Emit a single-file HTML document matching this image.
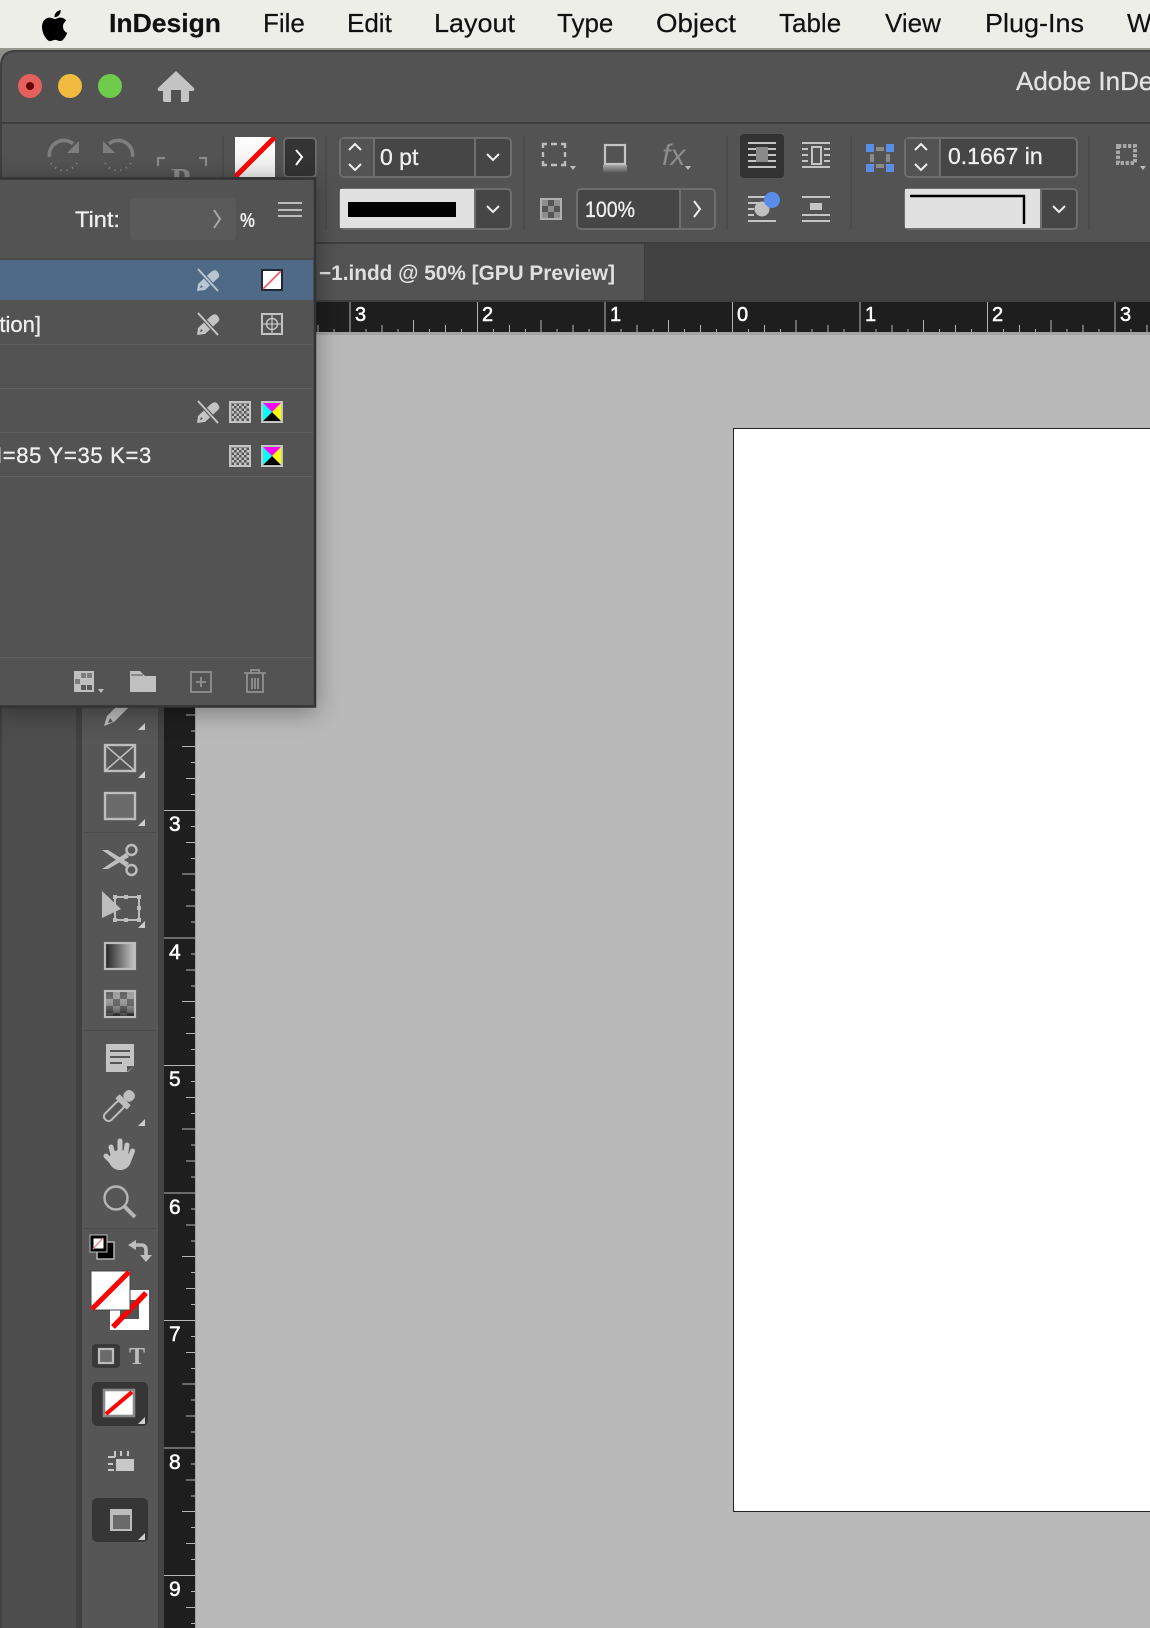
<!DOCTYPE html>
<html>
<head>
<meta charset="utf-8">
<title>InDesign</title>
<style>
html,body{margin:0;padding:0;background:#b9b9b9;}
body{width:1150px;height:1628px;overflow:hidden;}
svg{display:block;}
text{font-family:"Liberation Sans",sans-serif;}
.m{font-size:26px;fill:#111;stroke:#111;stroke-width:.2;}
.u{font-size:22px;fill:#f0f0f0;stroke:#f0f0f0;stroke-width:.3;}
.r{font-size:20px;fill:#fff;stroke:#fff;stroke-width:.5;}
.v{font-size:21px;fill:#fff;stroke:#fff;stroke-width:.5;}
</style>
</head>
<body>
<svg width="1150" height="1628" viewBox="0 0 1150 1628" xmlns="http://www.w3.org/2000/svg">
<defs>
<linearGradient id="sw" x1="0" y1="0" x2="0" y2="1"><stop offset="0" stop-color="#fff"/><stop offset="1" stop-color="#ededed"/></linearGradient>
<linearGradient id="gr" x1="0" y1="0" x2="1" y2="0"><stop offset="0" stop-color="#222"/><stop offset="1" stop-color="#c8c8c8"/></linearGradient>
<linearGradient id="shd" x1="0" y1="0" x2="0" y2="1"><stop offset="0" stop-color="#a8a8a8"/><stop offset="1" stop-color="#535353"/></linearGradient>
<linearGradient id="fe" x1="0" y1="0" x2="0" y2="1"><stop offset="0" stop-color="#fff" stop-opacity="0"/><stop offset="1" stop-color="#000" stop-opacity=".6"/></linearGradient>
<pattern id="hr" patternUnits="userSpaceOnUse" x="732" y="302" width="127.5" height="30">
<g stroke="#b5b5b5" stroke-width="1" shape-rendering="crispEdges">
<line x1=".5" y1="0" x2=".5" y2="30"/><line x1="16.4" y1="27" x2="16.4" y2="30"/><line x1="32.4" y1="23" x2="32.4" y2="30"/><line x1="48.3" y1="27" x2="48.3" y2="30"/><line x1="64.2" y1="18" x2="64.2" y2="30"/><line x1="80.2" y1="27" x2="80.2" y2="30"/><line x1="96.1" y1="23" x2="96.1" y2="30"/><line x1="112" y1="27" x2="112" y2="30"/>
</g></pattern>
<pattern id="vr" patternUnits="userSpaceOnUse" x="164" y="810" width="31" height="127.5">
<g stroke="#b5b5b5" stroke-width="1" shape-rendering="crispEdges">
<line x1="0" y1=".5" x2="31" y2=".5"/><line x1="27" y1="16.4" x2="31" y2="16.4"/><line x1="22" y1="32.4" x2="31" y2="32.4"/><line x1="27" y1="48.3" x2="31" y2="48.3"/><line x1="18" y1="64.2" x2="31" y2="64.2"/><line x1="27" y1="80.2" x2="31" y2="80.2"/><line x1="22" y1="96.1" x2="31" y2="96.1"/><line x1="27" y1="112" x2="31" y2="112"/>
</g></pattern>
<pattern id="ck" patternUnits="userSpaceOnUse" width="5" height="5"><rect width="5" height="5" fill="#c4c4c4"/><rect width="2.5" height="2.5" fill="#555"/><rect x="2.5" y="2.5" width="2.5" height="2.5" fill="#555"/></pattern>
<pattern id="fc" patternUnits="userSpaceOnUse" x="106" y="992" width="14" height="14"><rect width="14" height="14" fill="#9a9a9a"/><rect width="7" height="7" fill="#5c5c5c"/><rect x="7" y="7" width="7" height="7" fill="#5c5c5c"/></pattern>
<g id="pen"><path d="M0 22 L1 15 L14 3 Q17 0 20 2 L22 5 Q23 7 21 9 L8 21 Z M3 19 L6 18 L4 16 Z" fill-rule="evenodd" fill="currentColor"/></g>
<g id="cmyk">
<rect width="22" height="22" fill="#c4c4c4"/>
<polygon points="2,2 20,2 11,11" fill="#f0f"/><polygon points="20,2 20,20 11,11" fill="#ff0"/><polygon points="2,20 20,20 11,11" fill="#000"/><polygon points="2,2 2,20 11,11" fill="#0ff"/>
</g>
<g id="chk"><rect width="22" height="22" fill="#c4c4c4"/><rect x="2" y="2" width="18" height="18" fill="url(#ck)"/></g>
</defs>

<!-- menu bar -->
<rect width="1150" height="50" fill="#eeeee9"/>
<rect y="48" width="1150" height="2" fill="#97978f"/>
<path transform="translate(36,7) scale(1.55)" d="M18.71 19.5c-.83 1.24-1.71 2.45-3.05 2.47-1.34.03-1.77-.79-3.29-.79-1.53 0-2 .77-3.27.82-1.31.05-2.3-1.32-3.14-2.53C4.25 17 2.94 12.45 4.7 9.39c.87-1.52 2.43-2.48 4.12-2.51 1.28-.02 2.5.87 3.29.87.78 0 2.26-1.07 3.81-.91.65.03 2.47.26 3.64 1.98-.09.06-2.17 1.28-2.15 3.81.03 3.02 2.65 4.03 2.68 4.04-.03.07-.42 1.44-1.38 2.83M13 3.5c.73-.83 1.94-1.46 2.94-1.5.13 1.17-.34 2.35-1.04 3.19-.69.85-1.83 1.51-2.95 1.42-.15-1.15.41-2.35 1.05-3.11z" fill="#000"/>
<text x="109" y="32" class="m" style="font-weight:700" textLength="112" lengthAdjust="spacingAndGlyphs">InDesign</text>
<text x="263" y="32" class="m">File</text>
<text x="347" y="32" class="m">Edit</text>
<text x="434" y="32" class="m" textLength="81" lengthAdjust="spacingAndGlyphs">Layout</text>
<text x="557" y="32" class="m">Type</text>
<text x="656" y="32" class="m" textLength="80" lengthAdjust="spacingAndGlyphs">Object</text>
<text x="779" y="32" class="m">Table</text>
<text x="885" y="32" class="m">View</text>
<text x="985" y="32" class="m" textLength="99" lengthAdjust="spacingAndGlyphs">Plug-Ins</text>
<text x="1127" y="32" class="m">Window</text>

<!-- window -->
<rect y="50" width="1150" height="16" fill="#8d8d8a"/>
<path d="M0 1628 V66 Q0 50 16 50 H1150 V1628 Z" fill="#3f3f3f"/>
<path d="M2 122 V67 Q2 52 17 52 H1150 V122 Z" fill="#535353"/>
<rect x="2" y="124" width="1148" height="118" fill="#535353"/>
<rect x="2" y="244" width="1148" height="56" fill="#424242"/>
<rect x="280" y="244" width="364" height="56" fill="#535353"/>
<rect x="644" y="244" width="1" height="56" fill="#3c3c3c"/>

<!-- canvas -->
<rect x="196" y="335" width="954" height="1293" fill="#b9b9b9"/>

<!-- traffic lights -->
<circle cx="30" cy="86" r="12" fill="#e5605c"/><circle cx="30" cy="86" r="4" fill="#600"/>
<circle cx="70" cy="86" r="12" fill="#f1bb3f"/>
<circle cx="110" cy="86" r="12" fill="#6fcb4c"/>
<path d="M176 71 L194 88 Q195 91 192 91 L189 91 L189 100 Q189 102 187 102 L181 102 L181 90 L171 90 L171 102 L165 102 Q163 102 163 100 L163 91 L160 91 Q157 91 158 88 Z" fill="#c4c4c4"/>
<text x="1016" y="90" font-size="26" fill="#e2e2e2" stroke="#e2e2e2" stroke-width=".3">Adobe InDesign</text>

<!-- control bar: rotate -->
<g fill="none" stroke="#7e7e7e">
<path d="M49.5 157 A14.5 14.5 0 0 1 73 143.7" stroke-width="3.6"/>
<path d="M51 163 A15 15 0 0 0 77 163" stroke-width="2" stroke-dasharray="1.5 4.5"/>
<g transform="translate(182,0) scale(-1,1)"><path d="M49.5 157 A14.5 14.5 0 0 1 73 143.7" stroke-width="3.6"/><path d="M51 163 A15 15 0 0 0 77 163" stroke-width="2" stroke-dasharray="1.5 4.5"/></g>
<path d="M158 166 V158 H165 M199 158 H206 V166" stroke-width="2.2" stroke="#8a8a8a"/>
</g>
<polygon points="79,141 79,153 67,153" fill="#7e7e7e"/>
<polygon points="103,141 103,153 115,153" fill="#7e7e7e"/>
<text x="171" y="190" font-size="32" fill="#8a8a8a" style="font-family:'Liberation Serif',serif;font-weight:700">P</text>
<g fill="#4c4c4c">
<rect x="222" y="136" width="2" height="94"/><rect x="325" y="136" width="2" height="94"/><rect x="523" y="136" width="2" height="94"/><rect x="726" y="136" width="2" height="94"/><rect x="850" y="136" width="2" height="94"/><rect x="1088" y="136" width="2" height="94"/>
</g>
<!-- fill swatch -->
<svg x="235" y="137" width="40" height="40" viewBox="0 0 40 40"><rect width="40" height="40" fill="url(#sw)"/><line x1="42" y1="-2" x2="-2" y2="42" stroke="#f00" stroke-width="5"/></svg>
<rect x="284" y="138" width="32" height="39" rx="4" fill="#343434" stroke="#6a6a6a" stroke-width="2"/>
<path d="M296 150 L302 157 L296 165" fill="none" stroke="#fff" stroke-width="2"/>

<!-- stroke field -->
<rect x="340" y="138" width="171" height="39" rx="4" fill="#464646" stroke="#6e6e6e" stroke-width="2"/>
<path d="M341 139 H373 V176 H345 Q341 176 341 172 Z" fill="#535353"/>
<rect x="373" y="138" width="2" height="39" fill="#6e6e6e"/><rect x="474" y="138" width="2" height="39" fill="#6e6e6e"/>
<path d="M476 139 H506 Q510 139 510 143 V172 Q510 176 506 176 H476 Z" fill="#464646"/>
<text x="380" y="165" class="u" style="font-size:23px">0 pt</text>
<rect x="340" y="189" width="171" height="40" rx="4" fill="#464646" stroke="#6e6e6e" stroke-width="2"/>
<rect x="340" y="189" width="135" height="39" fill="#e1e1e1"/>
<rect x="474" y="189" width="2" height="40" fill="#6e6e6e"/>
<rect x="348" y="202" width="108" height="15" fill="#000"/>
<g fill="none" stroke="#f0f0f0" stroke-width="2">
<path d="M349 150 L355 144 L361 150"/><path d="M349 164 L355 170 L361 164"/><path d="M487 154 L493 160 L499 154"/>
<path d="M487 206 L493 212 L499 206"/>
</g>

<!-- frame/shadow/fx -->
<path d="M543 148 V144 H547 M551 144 H557 M561 144 H565 V148 M565 152 V157 M565 161 V165 H561 M557 165 H551 M547 165 H543 V161 M543 157 V152" fill="none" stroke="#bdbdbd" stroke-width="2.4"/>
<polygon points="570,166 576,166 573,170" fill="#bdbdbd"/>
<rect x="605" y="145" width="20" height="19" fill="none" stroke="#c4c4c4" stroke-width="2.2"/>
<rect x="603" y="165" width="24" height="8" fill="url(#shd)"/>
<text x="662" y="165" font-size="30" fill="#8c8c8c" style="font-style:italic">fx</text>
<polygon points="685,166 691,166 688,170" fill="#bdbdbd"/>
<rect x="541" y="199" width="20" height="20" fill="#555" stroke="#b0b0b0" stroke-width="2"/>
<g fill="#8e8e8e"><rect x="542" y="200" width="6" height="6"/><rect x="554" y="200" width="6" height="6"/><rect x="548" y="206" width="6" height="6"/><rect x="542" y="212" width="6" height="6"/><rect x="554" y="212" width="6" height="6"/></g>

<!-- opacity field -->
<rect x="577" y="189" width="138" height="40" rx="4" fill="#464646" stroke="#6e6e6e" stroke-width="2"/>
<path d="M680 190 H710 Q714 190 714 194 V224 Q714 228 710 228 H680 Z" fill="#535353"/>
<rect x="679" y="189" width="2" height="40" fill="#6e6e6e"/>
<path d="M694 201 L700 209 L694 217" fill="none" stroke="#f0f0f0" stroke-width="2"/>
<text x="585" y="217" class="u" textLength="50" lengthAdjust="spacingAndGlyphs">100%</text>

<!-- text wrap -->
<rect x="740" y="134" width="44" height="44" rx="4" fill="#333"/>
<g fill="#c4c4c4">
<rect x="748" y="142" width="28" height="2"/><rect x="748" y="148" width="28" height="2"/><rect x="748" y="154" width="28" height="2"/><rect x="748" y="160" width="28" height="2"/><rect x="748" y="166" width="28" height="2"/>
<rect x="802" y="142" width="28" height="2"/><rect x="802" y="166" width="28" height="2"/>
<rect x="802" y="148" width="6" height="2"/><rect x="802" y="154" width="6" height="2"/><rect x="802" y="160" width="6" height="2"/>
<rect x="824" y="148" width="6" height="2"/><rect x="824" y="154" width="6" height="2"/><rect x="824" y="160" width="6" height="2"/>
<rect x="748" y="196" width="28" height="2"/><rect x="748" y="202" width="12" height="2"/><rect x="748" y="208" width="6" height="2"/><rect x="748" y="214" width="6" height="2"/><rect x="748" y="220" width="28" height="2"/>
<rect x="802" y="196" width="28" height="2"/><rect x="802" y="214" width="28" height="2"/><rect x="802" y="220" width="28" height="2"/><rect x="810" y="203" width="12" height="7"/>
</g>
<rect x="756" y="147" width="12" height="15" fill="#8a8a8a"/>
<rect x="812" y="147" width="9" height="17" fill="none" stroke="#c4c4c4" stroke-width="2"/>
<circle cx="762" cy="209" r="7.5" fill="#c0c0c0"/>
<circle cx="772" cy="200" r="8" fill="#5a8de8"/>

<!-- corner -->
<g fill="#5a8de8"><rect x="866" y="144" width="8" height="8"/><rect x="886" y="144" width="8" height="8"/><rect x="866" y="164" width="8" height="8"/><rect x="886" y="164" width="8" height="8"/></g>
<g fill="#8a8a8a"><rect x="876" y="147" width="8" height="4"/><rect x="876" y="164" width="8" height="4"/><rect x="870" y="154" width="4" height="8"/><rect x="886" y="154" width="4" height="8"/></g>
<rect x="905" y="138" width="172" height="39" rx="4" fill="#464646" stroke="#6e6e6e" stroke-width="2"/>
<path d="M906 139 H939 V176 H910 Q906 176 906 172 Z" fill="#535353"/>
<rect x="939" y="138" width="2" height="39" fill="#6e6e6e"/>
<text x="948" y="164" class="u" style="font-size:23px">0.1667 in</text>
<rect x="905" y="189" width="172" height="40" rx="4" fill="#464646" stroke="#6e6e6e" stroke-width="2"/>
<rect x="905" y="189" width="135" height="39" fill="#e1e1e1"/>
<rect x="1040" y="189" width="2" height="40" fill="#6e6e6e"/>
<path d="M910 196 H1024 V224" fill="none" stroke="#000" stroke-width="2.4"/>
<g fill="none" stroke="#f0f0f0" stroke-width="2"><path d="M915 150 L921 144 L927 150"/><path d="M915 164 L921 170 L927 164"/><path d="M1053 206 L1059 212 L1065 206"/></g>
<rect x="1118" y="146" width="17" height="17" fill="none" stroke="#a8a8a8" stroke-width="4" stroke-dasharray="3.4 1.6"/>
<polygon points="1140,166 1146,166 1143,170" fill="#bdbdbd"/>

<!-- dividers -->
<rect x="2" y="122" width="1148" height="2" fill="#3e3e3e"/>
<rect x="2" y="242" width="1148" height="2" fill="#3e3e3e"/>
<rect x="2" y="300" width="1148" height="2" fill="#3e3e3e"/>

<text x="319" y="280" font-size="21" fill="#e0e0e0" style="font-weight:700" textLength="296" lengthAdjust="spacingAndGlyphs">−1.indd @ 50% [GPU Preview]</text>

<!-- h ruler -->
<rect x="2" y="302" width="1148" height="30" fill="#1e1e1e"/>
<rect x="2" y="302" width="1148" height="30" fill="url(#hr)"/>
<rect x="196" y="332" width="954" height="3" fill="#a3a3a3"/>
<text x="355" y="321" class="r">3</text><text x="482" y="321" class="r">2</text><text x="610" y="321" class="r">1</text><text x="737" y="321" class="r">0</text><text x="865" y="321" class="r">1</text><text x="992" y="321" class="r">2</text><text x="1120" y="321" class="r">3</text>

<!-- page -->
<rect x="733.5" y="428.5" width="417" height="1083" fill="#fff" stroke="#222" stroke-width="1" shape-rendering="crispEdges"/>

<!-- left column -->
<rect x="2" y="302" width="75" height="1326" fill="#4d4d4d"/>
<rect x="76" y="302" width="6" height="1326" fill="#414141"/>
<rect x="82" y="302" width="76" height="1326" fill="#565656"/>
<rect x="158" y="302" width="6" height="1326" fill="#444"/>
<rect x="164" y="302" width="31" height="1326" fill="#1e1e1e"/>
<rect x="164" y="302" width="31" height="1326" fill="url(#vr)"/>
<rect x="195" y="335" width="1" height="1293" fill="#a3a3a3"/>
<text x="169" y="831" class="v">3</text><text x="169" y="959" class="v">4</text><text x="169" y="1086" class="v">5</text><text x="169" y="1214" class="v">6</text><text x="169" y="1341" class="v">7</text><text x="169" y="1469" class="v">8</text><text x="169" y="1596" class="v">9</text>

<!-- tools -->
<g fill="#4b4b4b"><rect x="84" y="832" width="72" height="1"/><rect x="84" y="1030" width="72" height="1"/><rect x="84" y="1228" width="72" height="1"/></g>
<path d="M104 726 L107 716 L116 707 L129 707 L114 722 Z M108 723 L113 722 L110 718 Z" fill="#bdbdbd" fill-rule="evenodd"/>
<g fill="#cdcdcd">
<polygon points="138,730 145,730 145,723"/><polygon points="138,778 145,778 145,771"/><polygon points="138,826 145,826 145,819"/><polygon points="138,928 145,928 145,921"/><polygon points="138,1126 145,1126 145,1119"/><polygon points="138,1540 145,1540 145,1533"/>
</g>
<rect x="105" y="745" width="30" height="26" fill="none" stroke="#bdbdbd" stroke-width="2.4"/>
<path d="M105 745 L135 771 M135 745 L105 771" stroke="#bdbdbd" stroke-width="1.6"/>
<rect x="105" y="793" width="30" height="26" fill="#6a6a6a" stroke="#bdbdbd" stroke-width="2.4"/>
<polygon points="102,850 108,850 129,863 126,867" fill="#bdbdbd"/><polygon points="102,869 108,869 129,857 126,853" fill="#bdbdbd"/>
<circle cx="131.5" cy="850" r="5" fill="#565656" stroke="#bdbdbd" stroke-width="2.4"/><circle cx="131.5" cy="870" r="5" fill="#565656" stroke="#bdbdbd" stroke-width="2.4"/>
<polygon points="102,891 121,909 102,918" fill="#bdbdbd"/>
<rect x="115" y="897" width="24" height="23" fill="none" stroke="#bdbdbd" stroke-width="2"/>
<g fill="#bdbdbd"><rect x="113" y="895" width="4" height="4"/><rect x="124" y="895" width="4" height="4"/><rect x="137" y="895" width="4" height="4"/><rect x="137" y="906" width="4" height="4"/><rect x="113" y="918" width="4" height="4"/><rect x="124" y="918" width="4" height="4"/><rect x="137" y="918" width="4" height="4"/></g>
<rect x="105" y="943" width="30" height="26" fill="url(#gr)" stroke="#bdbdbd" stroke-width="2.2"/>
<rect x="105" y="991" width="30" height="26" fill="url(#fc)" stroke="#bdbdbd" stroke-width="2.2"/>
<rect x="106" y="992" width="28" height="24" fill="url(#fe)"/>
<path d="M106 1044 H134 V1066 L128 1072 H106 Z" fill="#c4c4c4"/>
<path d="M110 1051 H130 M110 1057 H130 M110 1063 H122" stroke="#565656" stroke-width="2"/>
<polygon points="127,1072 127,1066 134,1066" fill="#565656"/>
<g transform="translate(104,1121) rotate(-45)">
<rect x="2" y="-4.5" width="24" height="9" rx="4" fill="none" stroke="#bdbdbd" stroke-width="2"/>
<rect x="24" y="-8" width="6" height="16" rx="1" fill="#bdbdbd"/>
<rect x="30" y="-5.5" width="11" height="11" rx="4.5" fill="#bdbdbd"/>
</g>
<g stroke="#c4c4c4" stroke-width="5" stroke-linecap="round"><line x1="114" y1="1158" x2="111" y2="1147"/><line x1="120" y1="1158" x2="120" y2="1141"/><line x1="125" y1="1158" x2="127" y2="1145"/><line x1="129" y1="1160" x2="132.5" y2="1151"/><line x1="113" y1="1163" x2="106" y2="1156"/></g>
<ellipse cx="120" cy="1160" rx="11" ry="10" fill="#c4c4c4"/>
<circle cx="116" cy="1198" r="11.5" fill="none" stroke="#b5b5b5" stroke-width="2.4"/>
<line x1="124.5" y1="1206.5" x2="135" y2="1217" stroke="#b5b5b5" stroke-width="4"/>

<!-- default fill/stroke -->
<rect x="97" y="1242" width="17" height="17" fill="#000" stroke="#bdbdbd" stroke-width="1.4"/>
<rect x="92" y="1237" width="13" height="13" fill="#fff" stroke="#000" stroke-width="3"/>
<rect x="90" y="1235" width="17" height="17" fill="none" stroke="#bdbdbd" stroke-width="1"/>
<line x1="103" y1="1238" x2="93" y2="1249" stroke="#f08a8a" stroke-width="1.4"/>
<path d="M134 1245 H141 Q146 1245 146 1250 V1256" fill="none" stroke="#bdbdbd" stroke-width="3.6"/>
<polygon points="128,1245 136,1240 136,1250" fill="#bdbdbd"/><polygon points="140,1255 152,1255 146,1262" fill="#bdbdbd"/>
<!-- stroke big -->
<rect x="110" y="1290" width="39" height="40" fill="#fff"/>
<rect x="120" y="1300" width="19" height="19" fill="#535353"/>
<line x1="146" y1="1293" x2="113" y2="1327" stroke="#f00" stroke-width="5.4"/>
<rect x="91" y="1271" width="39" height="39" fill="#fff" stroke="#444" stroke-width="1"/>
<line x1="129" y1="1272" x2="92" y2="1309" stroke="#f00" stroke-width="5"/>
<!-- container -->
<rect x="92" y="1344" width="28" height="24" rx="4" fill="#393939"/>
<rect x="99" y="1349" width="14" height="14" fill="#6a6a6a" stroke="#bdbdbd" stroke-width="2.2"/>
<text x="129" y="1364" font-size="24" fill="#bdbdbd" style="font-family:'Liberation Serif',serif;font-weight:700">T</text>
<rect x="92" y="1382" width="56" height="44" rx="5" fill="#363636"/>
<rect x="104" y="1390" width="30" height="26" fill="#fff" stroke="#8a8a8a" stroke-width="2.6"/>
<line x1="132" y1="1392" x2="106" y2="1414" stroke="#f00" stroke-width="4"/>
<polygon points="138,1424 145,1424 145,1417" fill="#cdcdcd"/>
<g fill="#c8c8c8">
<rect x="116" y="1459" width="18" height="12"/><rect x="108" y="1456" width="7" height="2"/><rect x="114" y="1451" width="2" height="6"/><rect x="120" y="1451" width="2" height="5"/><rect x="127" y="1451" width="2" height="5"/><rect x="108" y="1463" width="5" height="2"/><rect x="108" y="1469" width="6" height="2"/>
</g>
<rect x="92" y="1498" width="56" height="44" rx="5" fill="#363636"/>
<rect x="110" y="1509" width="22" height="22" fill="#bdbdbd"/>
<rect x="113" y="1515" width="17" height="14" fill="#6a6a6a"/>
<polygon points="138,1540 145,1540 145,1533" fill="#cdcdcd"/>

<!-- panel -->
<g style="filter:drop-shadow(0 4px 12px rgba(0,0,0,.35))">
<rect x="-5" y="178.5" width="320" height="528" fill="#535353" stroke="#333" stroke-width="2.5"/>
</g>
<text x="75" y="227" class="u" textLength="45" lengthAdjust="spacingAndGlyphs">Tint:</text>
<rect x="130" y="198" width="106" height="42" rx="4" fill="#5a5a5a"/>
<path d="M214 210 L220 219 L214 228" fill="none" stroke="#a8a8a8" stroke-width="2"/>
<text x="240" y="227" font-size="20" fill="#f0f0f0" style="font-weight:700" textLength="15" lengthAdjust="spacingAndGlyphs">%</text>
<g fill="#bbb"><rect x="278" y="202" width="24" height="2"/><rect x="278" y="209" width="24" height="2"/><rect x="278" y="215" width="24" height="2"/></g>
<rect x="0" y="258" width="313" height="2" fill="#4a4a4a"/>
<rect x="0" y="260" width="313" height="40" fill="#4e6a87"/>
<g fill="#5f5f5f"><rect y="344" width="313" height="1"/><rect y="388" width="313" height="1"/><rect y="432" width="313" height="1"/><rect y="476" width="313" height="1"/><rect y="657" width="313" height="1"/></g>
<!-- pencils -->
<g color="#b9c5d1"><use href="#pen" x="197" y="269"/></g>
<line x1="198" y1="269" x2="218" y2="291" stroke="#4e6a87" stroke-width="4"/><line x1="198" y1="269" x2="218" y2="291" stroke="#b9c5d1" stroke-width="2"/>
<g color="#c4c4c4"><use href="#pen" x="197" y="313"/><use href="#pen" x="197" y="401"/></g>
<g stroke="#535353" stroke-width="4"><line x1="198" y1="313" x2="218" y2="335"/><line x1="198" y1="401" x2="218" y2="423"/></g>
<g stroke="#c4c4c4" stroke-width="2"><line x1="198" y1="313" x2="218" y2="335"/><line x1="198" y1="401" x2="218" y2="423"/></g>
<!-- swatches -->
<rect x="262" y="270" width="20" height="20" fill="#fff" stroke="#1e2733" stroke-width="2"/>
<line x1="281" y1="271" x2="263" y2="289" stroke="#ee5a5a" stroke-width="1.6"/>
<rect x="262" y="314" width="20" height="20" fill="none" stroke="#c4c4c4" stroke-width="2"/>
<circle cx="272" cy="324" r="5.5" fill="none" stroke="#c4c4c4" stroke-width="1.5"/>
<path d="M272 315 V333 M263 324 H281" stroke="#c4c4c4" stroke-width="1.3"/>
<use href="#chk" x="229" y="401"/><use href="#cmyk" x="261" y="401"/>
<use href="#chk" x="229" y="445"/><use href="#cmyk" x="261" y="445"/>
<text x="41" y="332" class="u" text-anchor="end">tion]</text>
<text x="152" y="463" class="u" text-anchor="end" style="letter-spacing:.7px">M=85 Y=35 K=3</text>
<!-- footer icons -->
<rect x="74" y="671" width="20" height="21" fill="#c0c0c0"/>
<g fill="#7e7e7e"><rect x="81" y="673" width="5" height="5"/><rect x="87" y="673" width="5" height="5"/><rect x="75" y="679" width="5" height="5"/></g>
<g fill="#5a5a5a"><rect x="81" y="685" width="5" height="5"/><rect x="87" y="685" width="5" height="5"/></g>
<polygon points="98,689 104,689 101,693" fill="#bdbdbd"/>
<path d="M130 671 H140 L145 676 H156 V692 H130 Z" fill="#c0c0c0"/>
<path d="M131 675 H143" stroke="#535353" stroke-width="1"/>
<rect x="191" y="672" width="20" height="20" fill="none" stroke="#8a8a8a" stroke-width="2"/>
<path d="M201 677 V687 M196 682 H206" stroke="#8a8a8a" stroke-width="2"/>
<path d="M244 673 H266 M251 673 V670 H259 V673 M247 674 V692 H263 V674 M252 678 V689 M255 678 V689 M258 678 V689" fill="none" stroke="#8a8a8a" stroke-width="2"/>
</svg>
</body>
</html>
